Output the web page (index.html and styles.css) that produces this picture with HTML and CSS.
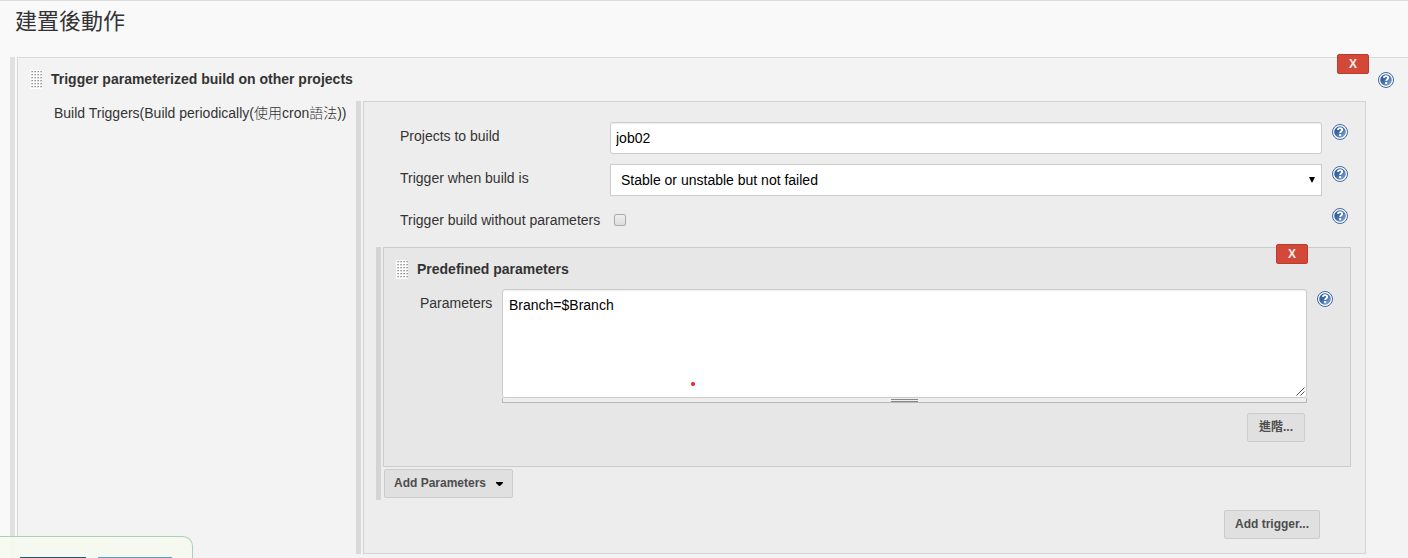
FILE: index.html
```html
<!DOCTYPE html>
<html lang="zh-Hant">
<head>
<meta charset="utf-8">
<title>建置後動作</title>
<link rel="stylesheet" href="styles.css">
</head>
<body>
<svg class="defs" aria-hidden="true">
  <defs>
    <linearGradient id="help-fill" x1="0" y1="0" x2="1" y2="1">
      <stop offset="0" stop-color="#2c5999"/>
      <stop offset=".4" stop-color="#3a66a6"/>
      <stop offset="1" stop-color="#8fb0dc"/>
    </linearGradient>
    <symbol id="help" viewBox="0 0 16 16">
      <circle cx="8" cy="8" r="7.500" fill="#fff" stroke="#3d67a5"/>
      <circle cx="8" cy="8" r="5.800" fill="url(#help-fill)"/>
      <path d="M5.800 5.900C6 4.600 6.900 4.100 8 4.100c1.300 0 2.200.7 2.200 1.800 0 1.400-2 1.500-2 3.200" fill="none" stroke="#fff" stroke-width="1.900"/>
      <rect x="7.100" y="10.100" width="2.100" height="2" fill="#fff"/>
    </symbol>
    <pattern id="dots" width="3" height="3" patternUnits="userSpaceOnUse">
      <rect width="3" height="3" fill="#fff"/>
      <path d="M1 1h2v1H1z" fill="#bbb"/>
      <path d="M2 1h1v1H2z" fill="#999"/>
      <path d="M1 2h2v1H1z" fill="#e4e4e4"/>
    </pattern>
    <symbol id="grip" viewBox="0 0 12 19">
      <rect width="12" height="19" fill="url(#dots)"/>
    </symbol>
  </defs>
</svg>

<main class="page">
  <h1 class="heading">建置後動作</h1>

  <section class="group group-outer">
    <div class="panel panel-outer">
      <button class="delete delete-outer" type="button">X</button>
      <header class="title-row">
        <svg class="grip" aria-hidden="true"><use href="#grip"/></svg>
        <h2 class="title">Trigger parameterized build on other projects</h2>
        <a class="help" href="#" aria-label="Help"><svg><use href="#help"/></svg></a>
      </header>

      <div class="triggers">
        <div class="label">Build Triggers(Build periodically(使用cron語法))</div>

        <div class="group group-trigger">
          <div class="panel panel-trigger">
            <div class="row">
              <label class="label" for="projects">Projects to build</label>
              <input class="field" id="projects" type="text" value="job02">
              <a class="help" href="#" aria-label="Help"><svg><use href="#help"/></svg></a>
            </div>
            <div class="row">
              <label class="label" for="condition">Trigger when build is</label>
              <div class="select-wrap">
                <select class="field select" id="condition">
                  <option>Stable or unstable but not failed</option>
                </select>
              </div>
              <a class="help" href="#" aria-label="Help"><svg><use href="#help"/></svg></a>
            </div>
            <div class="row">
              <label class="label" for="no-params">Trigger build without parameters</label>
              <div class="check-cell"><input class="check" id="no-params" type="checkbox"></div>
              <a class="help" href="#" aria-label="Help"><svg><use href="#help"/></svg></a>
            </div>

            <div class="group group-params">
              <div class="stack">
                <div class="panel panel-params">
                  <button class="delete delete-params" type="button">X</button>
                  <header class="title-row">
                    <svg class="grip" aria-hidden="true"><use href="#grip"/></svg>
                    <h3 class="title">Predefined parameters</h3>
                  </header>
                  <div class="row row-params">
                    <label class="label" for="params">Parameters</label>
                    <div class="area-wrap">
                      <textarea class="field area" id="params">Branch=$Branch</textarea>
                      <svg class="resizer" viewBox="0 0 9 9" aria-hidden="true"><path d="M.5 8.500l8-8M4.500 8.500l4-4" stroke="#555" fill="none"/></svg>
                      <div class="handle"></div>
                      <span class="mark"></span>
                    </div>
                    <a class="help" href="#" aria-label="Help"><svg><use href="#help"/></svg></a>
                  </div>
                  <div class="actions"><button class="button" type="button">進階...</button></div>
                </div>
                <button class="button button-menu" type="button">Add Parameters
                  <svg class="caret" viewBox="0 0 7 4" aria-hidden="true"><path d="M0 0h7v1L4 4H3L0 1z"/></svg>
                </button>
              </div>
            </div>

            <div class="actions actions-trigger"><button class="button" type="button">Add trigger...</button></div>
          </div>
        </div>
      </div>
    </div>
  </section>
</main>

<div class="save-bar">
  <span class="save save-primary"></span>
  <span class="save save-secondary"></span>
</div>
</body>
</html>
```
FILE: styles.css
```css
*, *::before, *::after { box-sizing: border-box; }

body {
  margin: 0;
  height: 100vh;
  overflow: hidden;
  background: #f9f9f9;
  color: #333;
  font: 14px/20px "Liberation Sans", "Noto Sans CJK TC", sans-serif;
}

.defs { position: absolute; width: 0; height: 0; }

.page {
  display: flex;
  flex-direction: column;
  min-height: 100vh;
  border-top: 1px solid #ddd;
}

.heading {
  margin: 0;
  padding: 6px 15px 20px;
  font-size: 22px;
  font-weight: 400;
  line-height: 30px;
}

.group { display: flex; gap: 2px; }
.group::before { content: ""; flex: 0 0 5px; background: #d9d9d9; }
.group-outer { flex: 1; margin-left: 10px; }
.group-outer::before { background: #e0e0e0; }
.group-params { margin: 0 14px 0 12px; }
.group-params::before { background: #d4d4d4; }

.panel {
  position: relative;
  flex: 1;
  min-width: 0;
  border: 1px solid #d3d3d3;
}
.panel-outer {
  background: #f3f3f3;
  border-color: #d9d9d9;
  border-right: 0;
  border-bottom: 0;
}
.panel-trigger { padding: 20px 0 14px; background: #ededed; }
.panel-params { padding-bottom: 24px; background: #e7e7e7; border-color: #ccc; }

.title-row { display: flex; padding: 12px 14px 0 12px; height: 41px; }
.title-row .help { margin-left: auto; }
.grip { width: 12px; height: 19px; }
.title { margin: 0 0 0 9px; font-size: 14px; font-weight: bold; line-height: 18px; }
.panel-outer > .title-row { height: 43px; }

.label { white-space: nowrap; }

.triggers {
  display: grid;
  grid-template-columns: 302px 1fr;
  padding: 0 42px 4px 36px;
}
.triggers > .label { padding-top: 2px; font-weight: 300; }

.row {
  display: grid;
  grid-template-columns: 200px 1fr 16px;
  column-gap: 10px;
  margin: 0 17px 10px 36px;
}
.row .label { padding-top: 4px; }
.row-params { grid-template-columns: 72px 1fr 16px; }
.check-cell { height: 31px; padding: 8px 4px; }

.help { width: 16px; height: 16px; margin-top: 2px; }
.help svg { display: block; width: 16px; height: 16px; }

.field {
  display: block;
  width: 100%;
  height: 32px;
  margin: 0;
  padding: 5px;
  border: 1px solid #ccc;
  border-radius: 3px;
  background: #fff;
  box-shadow: inset 0 1px 1px #eee;
  color: #000;
  font: inherit;
}
.select-wrap, .area-wrap { position: relative; }
.select { appearance: none; padding: 5px 10px; border-radius: 0; box-shadow: none; }
.select-wrap::after {
  content: "";
  position: absolute;
  top: 13px;
  right: 7px;
  border: solid transparent;
  border-width: 6px 3px 0;
  border-top-color: #000;
  pointer-events: none;
}

.check {
  display: block;
  appearance: none;
  width: 12px;
  height: 12px;
  margin: 0;
  border: 1px solid #aaa;
  border-radius: 2px;
  background: linear-gradient(#eee, #ddd);
}

.area { height: 109px; padding: 5px 6px; resize: none; }
.resizer { position: absolute; right: 2px; top: 98px; width: 9px; height: 9px; }
.handle {
  display: flex;
  justify-content: center;
  height: 5px;
  padding-top: 1px;
  border: 1px solid #b8b8b0;
  border-top: 0;
  background: #eee;
}
.handle::before {
  content: "";
  width: 27px;
  height: 3px;
  border: solid #888;
  border-width: 1px 0;
}
.mark {
  position: absolute;
  left: 189px;
  top: 93px;
  width: 4px;
  height: 4px;
  border-radius: 2px;
  background: #e81c24;
}

.actions { display: flex; justify-content: flex-end; padding-right: 45px; }
.actions-trigger { padding-top: 10px; }
.stack { flex: 1; min-width: 0; padding-bottom: 2px; }

.button {
  min-width: 58px;
  height: 29px;
  padding: 0 9px 2px;
  border: 1px solid #ccc;
  border-radius: 2px;
  background: #e0e0e0;
  color: #4d4d4d;
  font: bold 12px/20px "Liberation Sans", "Noto Sans CJK TC", sans-serif;
}
.actions-trigger .button { min-width: 96px; }
.button-menu {
  display: flex;
  align-items: center;
  gap: 10px;
  margin: 2px 0 0 1px;
}
.caret { width: 7px; height: 4px; margin-top: 2px; }

.delete {
  position: absolute;
  top: -4px;
  width: 32px;
  height: 20px;
  padding: 0;
  border: 1px solid #bf3a2c;
  border-radius: 2px;
  background: #d24939;
  color: #eee;
  font: bold 12px/18px "Liberation Sans", sans-serif;
}
.delete-outer { right: 39px; }
.delete-params { right: 42px; }

.save-bar {
  position: fixed;
  left: 0;
  bottom: 0;
  display: flex;
  align-items: flex-end;
  gap: 12px;
  width: 193px;
  height: 22px;
  padding-left: 20px;
  border: solid #a8d0ba;
  border-width: 1px 1px 0 0;
  border-top-right-radius: 10px;
  background: rgb(245 249 239 / 90%);
}
.save { height: 1px; }
.save-primary { width: 66px; background: #2c5570; }
.save-secondary { width: 74px; background: #5b9bd5; }
```
